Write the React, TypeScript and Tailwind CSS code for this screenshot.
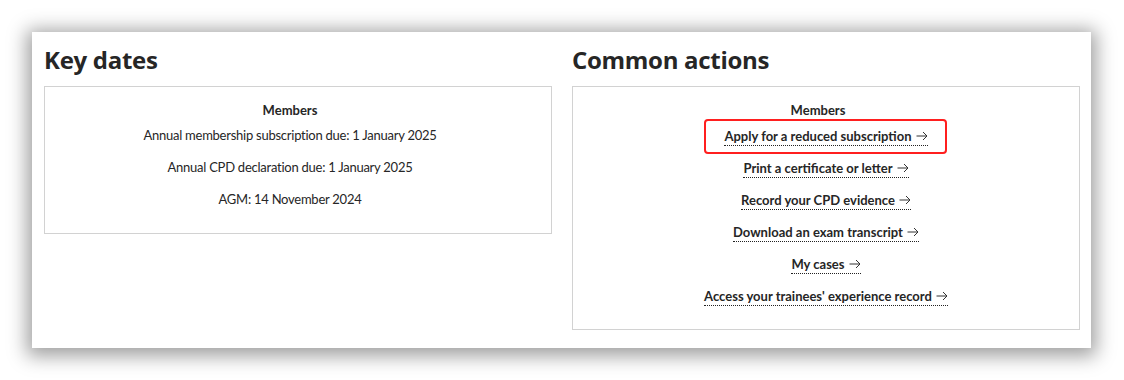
import React from "react";

const dates = [
  "Annual membership subscription due: 1 January 2025",
  "Annual CPD declaration due: 1 January 2025",
  "AGM: 14 November 2024",
];

const actions = [
  "Apply for a reduced subscription",
  "Print a certificate or letter",
  "Record your CPD evidence",
  "Download an exam transcript",
  "My cases",
  "Access your trainees' experience record",
];

const Arrow = () => (
  <svg className="inline-block ml-[4px] w-[12px] h-[10px]" viewBox="0 0 12 10" fill="none">
    <path d="M0.5 5h10.5M7 1l4 4-4 4" stroke="#333" strokeWidth="1" />
  </svg>
);

const ActionLink = ({ label, highlight }: { label: string; highlight?: boolean }) => (
  <div className="h-8 flex items-center justify-center">
    <span className="relative">
      <a
        href="#"
        className="inline-flex items-center font-bold leading-[18px] border-b border-dotted border-[#222] pt-[1px]"
      >
        {label}
        <Arrow />
      </a>
      {highlight && (
        <span className="absolute left-[-20px] right-[-19px] top-[-7px] bottom-[-8px] border-2 border-[#ff1f1f] rounded-[4px]" />
      )}
    </span>
  </div>
);

export default function App() {
  return (
    <div
      className="w-[1124px] h-[380px] bg-white pt-8 pl-8 text-[#262626]"
      style={{ fontFamily: "Lato, 'Liberation Sans', sans-serif" }}
    >
      <div className="w-[1059px] h-[316px] bg-white shadow-[0_3px_18px_5px_rgba(0,0,0,0.38)] flex gap-5 pl-3 pr-[11px]">
        <section className="flex-1">
          <h2 className="font-['Open_Sans'] text-[24px] font-bold leading-8 pt-[12px] mb-[10px] tracking-[-0.3px]">
            Key dates
          </h2>
          <div className="border border-[#d2d2d2] pt-[13px] pb-[17px] pr-4 text-center text-[13px]">
            <div className="font-bold leading-5">Members</div>
            {dates.map((d) => (
              <div key={d} className="h-8 flex items-center justify-center tracking-[-0.25px]">
                {d}
              </div>
            ))}
          </div>
        </section>
        <section className="flex-1">
          <h2 className="font-['Open_Sans'] text-[24px] font-bold leading-8 pt-[12px] mb-[10px] tracking-[-0.3px]">
            Common actions
          </h2>
          <div className="border border-[#d2d2d2] pt-[13px] pb-[17px] text-center text-[13px]">
            <div className="font-bold leading-5 pr-4">Members</div>
            {actions.map((a, i) => (
              <ActionLink key={a} label={a} highlight={i === 0} />
            ))}
          </div>
        </section>
      </div>
    </div>
  );
}
